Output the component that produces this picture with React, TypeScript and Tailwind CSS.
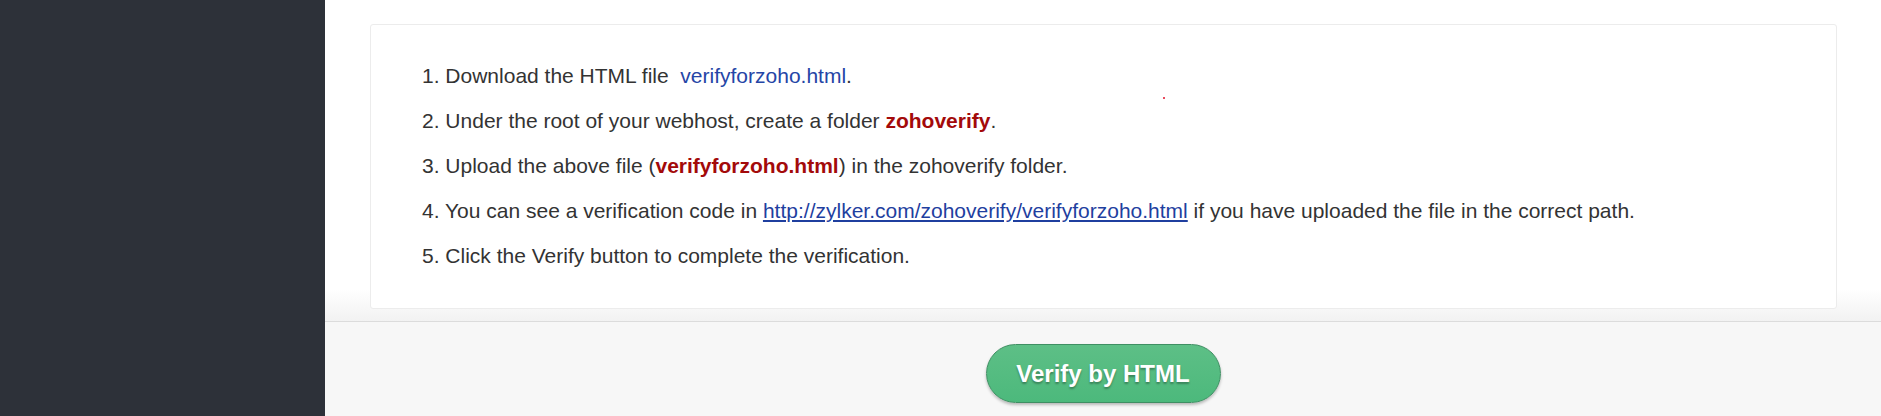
export default function App() {
  const steps = [
    <>
      Download the HTML file{"\u00a0 "}
      <span className="text-[#2545a6]">verifyforzoho.html</span>.
    </>,
    <>
      Under the root of your webhost, create a folder{" "}
      <b className="text-[#a30a0a]">zohoverify</b>.
    </>,
    <>
      Upload the above file (<b className="text-[#a30a0a]">verifyforzoho.html</b>) in the zohoverify folder.
    </>,
    <>
      You can see a verification code in{" "}
      <a className="text-[#1f3f9f] underline">http://zylker.com/zohoverify/verifyforzoho.html</a>{" "}
      if you have uploaded the file in the correct path.
    </>,
    <>Click the Verify button to complete the verification.</>,
  ];

  return (
    <div className="flex h-[416px] w-full overflow-hidden font-['Liberation_Sans',Arial,sans-serif]">
      <aside className="w-[325px] shrink-0 bg-[#2d3139]" />

      <main className="flex flex-1 flex-col bg-white">
        <div className="relative h-[321px] shrink-0 bg-gradient-to-b from-white from-90% to-[#f2f2f2] pt-[24px] pl-[45px] pr-[44px]">
          <div className="h-[285px] rounded-[3px] border border-[#ececec] bg-white pt-[28px] pl-[51px]">
            <ol className="text-[21px] leading-[45px] text-[#333]">
              {steps.map((s, i) => (
                <li key={i}>
                  {i + 1}. {s}
                </li>
              ))}
            </ol>
          </div>
          <span className="absolute left-[838px] top-[97px] h-[2px] w-[2px] rounded-full bg-[#e0102a]" />
        </div>

        <div className="flex flex-1 items-center justify-center border-t border-[#dcdcdc] bg-[#f7f7f7] pt-[9px]">
          <button className="h-[59px] w-[235px] rounded-full border border-[#3f8f63] bg-gradient-to-b from-[#5dbf86] to-[#4cb97c] text-[24px] font-bold text-white shadow-[0_2px_3px_rgba(0,0,0,0.25)] [text-shadow:0_2px_2px_rgba(0,0,0,0.3)]">
            Verify by HTML
          </button>
        </div>
      </main>
    </div>
  );
}
